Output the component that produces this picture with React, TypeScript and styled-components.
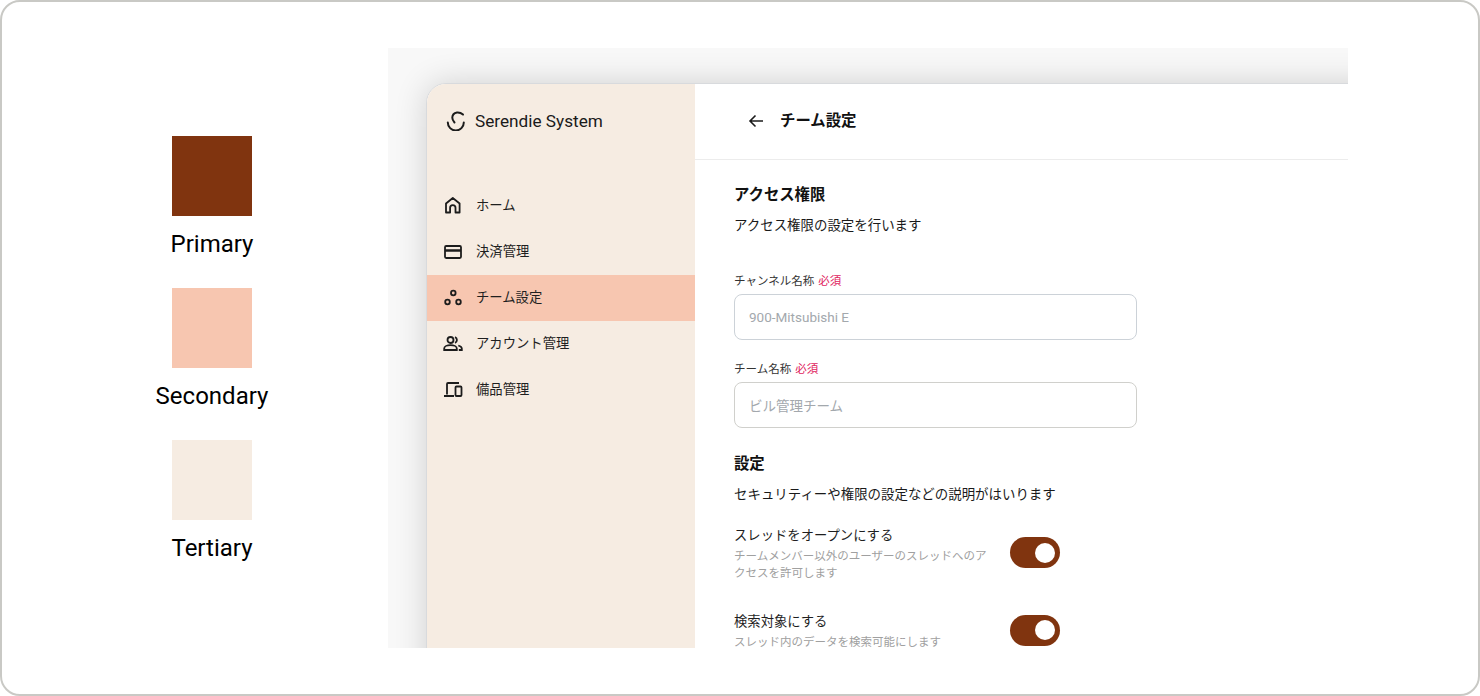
import React from "react";
import styled, { createGlobalStyle } from "styled-components";

const JP = `"Roboto", "Noto Sans CJK JP", sans-serif`;

const Global = createGlobalStyle`
  html, body { margin: 0; padding: 0; background: #fff; }
  body { font-family: ${JP}; color: #111; }
  * { box-sizing: border-box; }
`;

const Frame = styled.div`
  width: 1480px;
  height: 696px;
  border: 2px solid #c9c9c5;
  border-radius: 20px;
  background: #fff;
  display: flex;
  overflow: hidden;
`;
const Legend = styled.div`
  width: 386px;
  flex: none;
  padding: 134px 0 0 170px;
  display: flex;
  flex-direction: column;
`;
const LegendItem = styled.div`
  width: 80px;
  height: 152px;
  display: flex;
  flex-direction: column;
  align-items: center;
`;
const Swatch = styled.div<{ $c: string }>`
  width: 80px;
  height: 80px;
  flex: none;
  background: ${(p) => p.$c};
`;
const SwatchLabel = styled.div`
  margin-top: 14px;
  font-family: "Roboto", sans-serif;
  font-size: 24px;
  line-height: 28px;
  white-space: nowrap;
  color: #000;
`;
const Stage = styled.div`
  width: 960px;
  height: 600px;
  margin-top: 46px;
  flex: none;
  background: #f8f8f8;
  padding: 35px 0 0 38px;
  overflow: hidden;
`;
const Win = styled.div`
  width: 1000px;
  height: 640px;
  display: flex;
  border-radius: 20px 0 0 0;
  border: 1px solid #d8dadd;
  background: #fff;
  overflow: hidden;
  box-shadow: 0 0 32px rgba(0, 0, 0, 0.16);
`;
const Side = styled.aside`
  width: 268px;
  flex: none;
  background: #f6ece2;
`;
const Brand = styled.div`
  height: 74px;
  padding-left: 18px;
  display: flex;
  align-items: center;
  gap: 10px;
  font-size: 17.2px;
  color: #1a1a1a;
  margin-bottom: 25px;
`;
const Nav = styled.nav`
  display: flex;
  flex-direction: column;
`;
const NavItem = styled.div<{ $active?: boolean }>`
  height: 46px;
  padding-left: 16px;
  padding-bottom: 2px;
  display: flex;
  align-items: center;
  gap: 13px;
  font-size: 13.33px;
  color: #1f1f1f;
  background: ${(p) => (p.$active ? "#f7c6b0" : "transparent")};
`;
const NavText = styled.span`
  padding-bottom: 2px;
`;
const Main = styled.main`
  flex: 1;
  background: #fff;
`;
const Header = styled.header`
  height: 76px;
  border-bottom: 1px solid #ececec;
  padding: 0 0 2px 52px;
  display: flex;
  align-items: center;
  gap: 15px;
  font-size: 15.4px;
  font-weight: 700;
  color: #111;
`;
const HeaderTitle = styled.span`
  padding-bottom: 3px;
`;
const Content = styled.div`
  padding: 24px 0 0 39px;
  width: 442px;
`;
const Heading = styled.h2<{ $mt?: number }>`
  margin: ${(p) => p.$mt ?? 0}px 0 0;
  font-size: 15.35px;
  font-weight: 700;
  line-height: 22px;
  color: #111;
`;
const Desc = styled.p`
  margin: 10px 0 0;
  font-size: 13.45px;
  line-height: 20px;
  color: #1a1a1a;
`;
const Label = styled.div<{ $mt: number }>`
  margin-top: ${(p) => p.$mt}px;
  font-size: 11.5px;
  line-height: 16px;
  color: #333;
  display: flex;
  gap: 4px;
`;
const Required = styled.span`
  color: #e0245e;
`;
const Field = styled.div<{ $tone: string }>`
  margin-top: 5px;
  height: 46px;
  width: 403px;
  border: 1px solid ${(p) => p.$tone};
  border-radius: 8px;
  padding-left: 14px;
  padding-bottom: 1px;
  display: flex;
  align-items: center;
  font-size: 13.5px;
  color: #a3a8ad;
`;
const Row = styled.div<{ $mt: number }>`
  margin-top: ${(p) => p.$mt}px;
  display: flex;
  align-items: center;
`;
const RowText = styled.div`
  width: 276px;
  padding-right: 16px;
  flex: none;
`;
const RowTitle = styled.div`
  font-size: 13.33px;
  line-height: 20px;
  color: #1f1f1f;
`;
const RowSub = styled.div`
  margin-top: 2px;
  font-size: 11.5px;
  line-height: 17px;
  color: #a0a0a0;
`;
const Toggle = styled.div`
  width: 50px;
  height: 31px;
  margin-bottom: 3px;
  border-radius: 16px;
  background: #80340f;
  display: flex;
  align-items: center;
  justify-content: flex-end;
  padding-right: 5px;
`;
const Knob = styled.div`
  width: 20px;
  height: 20px;
  border-radius: 50%;
  background: #fff;
`;

const Ic = styled.svg`
  width: 20px;
  height: 20px;
  flex: none;
  fill: none;
  stroke: #1c1c1c;
  stroke-width: 1.8;
`;

const Logo = () => (
  <svg width="20" height="20" viewBox="0 0 20 20" fill="none" stroke="#1c1c1c" strokeWidth="2" strokeLinecap="round">
    <path d="M2.800 11.500a8 8 0 0 0 16 0" />
    <path d="M18 3.600C16 1.800 14 1.300 12 1.500 9 2 7.300 4.300 7.300 6.800 7.300 8.500 8.200 10 9.500 11.500" />
  </svg>
);

const items = [
  { t: "ホーム", i: <path d="M3 17.500V8.500L9.800 3l6.800 5.500v9h-4.100v-4.700a2.700 2.700 0 0 0-5.400 0v4.700z" strokeLinejoin="round" /> },
  { t: "決済管理", i: <><rect x="2" y="5" width="16" height="12" rx="1.200" /><path d="M2 9.500h16" strokeWidth="2.400" /></> },
  { t: "チーム設定", a: true, i: <><circle cx="10.300" cy="6" r="2.300" /><circle cx="4.500" cy="15" r="2.300" /><circle cx="15.500" cy="15" r="2.300" /></> },
  { t: "アカウント管理", i: <><circle cx="7.500" cy="7" r="3" /><path d="M1.200 17v-1.500c0-2 3-3.300 6.300-3.300s6.300 1.300 6.300 3.300V17zM12 4.200a3 3 0 0 1 0 5.600M15.300 12.500c2 .6 3.500 1.600 3.500 3.100V17h-3" /></> },
  { t: "備品管理", i: <><path d="M4 15.500V5a1 1 0 0 1 1-1h11M1 17h10" /><rect x="12.500" y="7.500" width="6" height="9.500" rx="1" /></> },
];

export default function App() {
  return (
    <Frame>
      <Global />
      <Legend>
        <LegendItem><Swatch $c="#80340f" /><SwatchLabel>Primary</SwatchLabel></LegendItem>
        <LegendItem><Swatch $c="#f7c6b0" /><SwatchLabel>Secondary</SwatchLabel></LegendItem>
        <LegendItem><Swatch $c="#f6ece2" /><SwatchLabel>Tertiary</SwatchLabel></LegendItem>
      </Legend>
      <Stage>
        <Win>
          <Side>
            <Brand><Logo />Serendie System</Brand>
            <Nav>
              {items.map((n) => (
                <NavItem key={n.t} $active={n.a}>
                  <Ic viewBox="0 0 20 20">{n.i}</Ic>
                  <NavText>{n.t}</NavText>
                </NavItem>
              ))}
            </Nav>
          </Side>
          <Main>
            <Header>
              <svg width="18" height="18" viewBox="0 0 18 18" fill="none" stroke="#1c1c1c" strokeWidth="1.600"><path d="M16 9H3M8.500 3.500 3 9l5.500 5.500" /></svg>
              <HeaderTitle>チーム設定</HeaderTitle>
            </Header>
            <Content>
              <Heading>アクセス権限</Heading>
              <Desc>アクセス権限の設定を行います</Desc>
              <Label $mt={37}>チャンネル名称<Required>必須</Required></Label>
              <Field $tone="#ccd2d8">900-Mitsubishi E</Field>
              <Label $mt={21}>チーム名称<Required>必須</Required></Label>
              <Field $tone="#d0d0cc">ビル管理チーム</Field>
              <Heading $mt={25}>設定</Heading>
              <Desc>セキュリティーや権限の設定などの説明がはいります</Desc>
              <Row $mt={21}>
                <RowText>
                  <RowTitle>スレッドをオープンにする</RowTitle>
                  <RowSub>チームメンバー以外のユーザーのスレッドへのアクセスを許可します</RowSub>
                </RowText>
                <Toggle><Knob /></Toggle>
              </Row>
              <Row $mt={30}>
                <RowText>
                  <RowTitle>検索対象にする</RowTitle>
                  <RowSub>スレッド内のデータを検索可能にします</RowSub>
                </RowText>
                <Toggle><Knob /></Toggle>
              </Row>
            </Content>
          </Main>
        </Win>
      </Stage>
    </Frame>
  );
}
